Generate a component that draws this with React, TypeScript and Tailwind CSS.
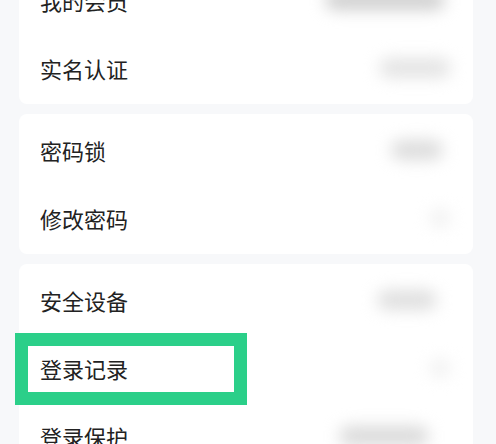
import React from 'react';

type Row = { label: string; blob: string; mark?: boolean };

const groups: Row[][] = [
  [
    { label: '我的会员', blob: 'w-[120px] mr-[28px] bg-[#cfcfcf]' },
    { label: '实名认证', blob: 'w-[72px] mr-[22px] bg-[#e4e4e4]' },
  ],
  [
    { label: '密码锁', blob: 'w-[52px] mr-[30px] bg-[#dcdcdc]' },
    { label: '修改密码', blob: 'w-[22px] mr-[22px] bg-[#f2f2f2]' },
  ],
  [
    { label: '安全设备', blob: 'w-[60px] mr-[36px] bg-[#dfdfdf]' },
    { label: '登录记录', blob: 'w-[22px] mr-[22px] bg-[#f2f2f2]', mark: true },
    { label: '登录保护', blob: 'w-[90px] mr-[44px] bg-[#dadada]' },
  ],
];

export default function App() {
  return (
    <div
      className="h-[444px] w-[496px] overflow-hidden bg-[#f7f8fa]"
      style={{ fontFamily: '"Noto Sans CJK SC", "Noto Sans", sans-serif' }}
    >
      <div className="mt-[-36px] flex flex-col gap-[10px] pl-[19px] pr-[23px]">
        {groups.map((rows, gi) => (
          <div key={gi} className="rounded-lg bg-white py-0.5">
            {rows.map((row) => (
              <div key={row.label} className="relative flex h-[68px] items-center justify-between pl-[21px]">
                <span className="text-[22px] leading-none text-[#222222]">{row.label}</span>
                <span className={`h-[20px] rounded-full blur-[8px] ${row.blob}`} />
                {row.mark && (
                  <div className="absolute left-[-4px] top-[-1px] h-[72px] w-[232px] border-[13px] border-[#2bcf89]" />
                )}
              </div>
            ))}
          </div>
        ))}
      </div>
    </div>
  );
}
